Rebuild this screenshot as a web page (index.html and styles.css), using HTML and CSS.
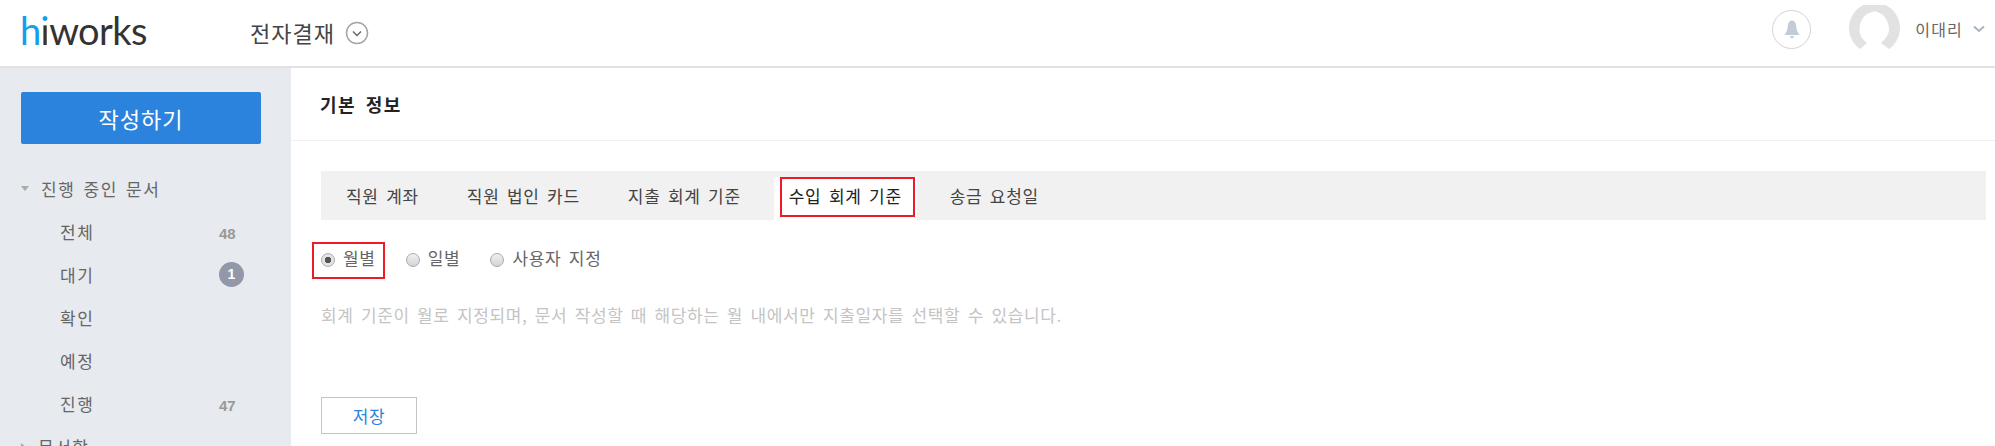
FILE: index.html
```html
<!DOCTYPE html>
<html lang="ko">
<head>
  <meta charset="UTF-8">
  <meta name="viewport" content="width=device-width, initial-scale=1.0">
  <title>전자결재 - 기본 정보</title>
  <link rel="stylesheet" href="styles.css">
</head>
<body>
  <header class="topbar">
    <div class="logo"><span class="logo-h">h</span><span class="logo-i">i</span>works</div>
    <div class="app-name">전자결재</div>
    <svg class="app-arrow" width="24" height="24" viewBox="0 0 24 24">
      <circle cx="12" cy="12" r="10.5" fill="#fff" stroke="#a5a5a5" stroke-width="1.5"/>
      <path d="M8 10.500 L12 14.500 L16 10.500" fill="none" stroke="#666" stroke-width="1.4"/>
    </svg>
    <div class="topbar-right">
      <div class="bell">
        <svg width="16" height="19" viewBox="0 0 16 19">
          <path d="M8 0.500 C5.500 0.500 4 3 3.800 6 C3.500 10 2.500 12.500 0.500 15 L15.500 15 C13.500 12.500 12.500 10 12.200 6 C12 3 10.500 0.500 8 0.500 Z" fill="#c3cbd5"/>
          <rect x="6" y="16" width="4" height="2" rx="1" fill="#c3cbd5"/>
        </svg>
      </div>
      <svg class="avatar" width="51" height="44" viewBox="0 0 51 44">
        <path d="M11 44 A25.500 25.500 0 1 1 40 44 L32 38 C37 33 40 29 40 25 C40 16 35 9 29 7.500 L26 6 L22 7.500 C15 9 10.500 16 10.500 25 C10.500 30 13 34 18 38 Z" fill="#e2e2e2"/>
      </svg>
      <span class="user-name">이대리</span>
      <svg class="user-arrow" width="12" height="8" viewBox="0 0 12 8">
        <path d="M1 1.500 L6 6 L11 1.500" fill="none" stroke="#a9b2bd" stroke-width="2"/>
      </svg>
    </div>
  </header>

  <div class="layout">
    <aside class="sidebar">
      <button class="write-btn">작성하기</button>
      <div class="nav-group"><span class="tri-down"></span>진행 중인 문서</div>
      <ul class="nav-list">
        <li><span>전체</span><span class="count">48</span></li>
        <li><span>대기</span><span class="badge">1</span></li>
        <li><span>확인</span></li>
        <li><span>예정</span></li>
        <li><span>진행</span><span class="count">47</span></li>
      </ul>
      <div class="nav-group"><span class="tri-right"></span>문서함</div>
    </aside>

    <main class="content">
      <h2 class="page-title">기본 정보</h2>
      <div class="panel">
        <div class="tabs">
          <a class="tab">직원 계좌</a>
          <a class="tab">직원 법인 카드</a>
          <a class="tab">지출 회계 기준</a>
          <a class="tab active">수입 회계 기준</a>
          <a class="tab">송금 요청일</a>
        </div>
        <div class="radios">
          <label class="radio marked"><span class="dot checked"></span>월별</label>
          <label class="radio"><span class="dot"></span>일별</label>
          <label class="radio"><span class="dot"></span>사용자 지정</label>
        </div>
        <p class="hint">회계 기준이 월로 지정되며, 문서 작성할 때 해당하는 월 내에서만 지출일자를 선택할 수 있습니다.</p>
        <button class="save-btn">저장</button>
      </div>
    </main>
  </div>
</body>
</html>
```

FILE: styles.css
```css
* {
  box-sizing: border-box;
}

html, body {
  height: 100%;
}

body {
  margin: 0;
  font-family: 'Noto Sans CJK KR', 'Noto Sans', sans-serif;
  background: #fff;
  color: #333;
  overflow: hidden;
}

.topbar {
  display: flex;
  align-items: center;
  height: 68px;
  padding: 0 10px 0 20px;
  border-bottom: 2px solid #e2e2e2;
}

.logo {
  width: 230px;
  margin-bottom: 6px;
  font-family: 'Lato', sans-serif;
  font-size: 38px;
  line-height: 40px;
  color: #333;
  letter-spacing: -0.6px;
}

.logo-h {
  color: #12a0ec;
}

.logo-i {
  background: linear-gradient(#12a0ec 0, #12a0ec 42%, #333 42%);
  -webkit-background-clip: text;
  background-clip: text;
  color: transparent;
}

.app-name {
  margin-bottom: 3px;
  font-size: 22px;
  color: #444;
  letter-spacing: 1px;
}

.app-arrow {
  margin-left: 10px;
}

.topbar-right {
  display: flex;
  align-items: center;
  margin-left: auto;
  padding-bottom: 8px;
}

.bell {
  display: flex;
  align-items: center;
  justify-content: center;
  width: 39px;
  height: 39px;
  border: 1px solid #d4d4d4;
  border-radius: 50%;
}

.avatar {
  display: block;
  margin-left: 38px;
  margin-bottom: 4px;
}

.user-name {
  margin-left: 15px;
  font-size: 16px;
  color: #666;
  letter-spacing: 1.2px;
}

.user-arrow {
  margin-left: 10px;
}

.layout {
  display: flex;
  height: 378px;
}

.sidebar {
  width: 291px;
  padding: 24px 0 0 21px;
  background: #e7eaee;
  overflow: hidden;
}

.write-btn {
  display: block;
  width: 240px;
  height: 52px;
  padding-bottom: 2px;
  border: 0;
  border-radius: 2px;
  background: #2b83dd;
  color: #fff;
  font: inherit;
  font-size: 22px;
  letter-spacing: 1px;
}

.nav-group {
  display: flex;
  align-items: center;
  height: 43px;
  margin-top: 23px;
  font-size: 17px;
  color: #666;
  letter-spacing: 1.5px;
  word-spacing: 2px;
}

.nav-group:last-child {
  margin-top: 0;
}

.tri-down {
  width: 0;
  height: 0;
  margin-right: 12px;
  border-top: 5px solid #aaa;
  border-left: 4px solid transparent;
  border-right: 4px solid transparent;
}

.tri-right {
  width: 0;
  height: 0;
  margin-right: 12px;
  border-left: 5px solid #aaa;
  border-top: 4px solid transparent;
  border-bottom: 4px solid transparent;
}

.nav-list {
  list-style: none;
  margin: 0;
  padding: 0 0 0 39px;
}

.nav-list li {
  position: relative;
  height: 43px;
  display: flex;
  align-items: center;
  font-size: 17px;
  color: #666;
  letter-spacing: 1.5px;
}

.count {
  position: absolute;
  left: 159px;
  top: 15px;
  font-size: 15px;
  font-weight: bold;
  font-family: 'Liberation Sans', sans-serif;
  color: #999;
  letter-spacing: 0;
}

.badge {
  position: absolute;
  left: 159px;
  width: 25px;
  height: 25px;
  border-radius: 50%;
  background: #9298a8;
  color: #fff;
  text-align: center;
  line-height: 25px;
  font-size: 14px;
  font-weight: bold;
  font-family: 'Liberation Sans', sans-serif;
  letter-spacing: 0;
}

.content {
  flex: 1;
}

.page-title {
  height: 73px;
  margin: 0;
  padding-left: 29px;
  border-bottom: 1px solid #f1f1f1;
  font-size: 18px;
  line-height: 72px;
  font-weight: bold;
  color: #222;
  letter-spacing: 1.5px;
  word-spacing: 3px;
}

.panel {
  padding: 30px 9px 0 30px;
}

.tabs {
  display: flex;
  height: 49px;
  padding: 6px 0 0 1px;
  background: #f1f1f1;
}

.tab {
  position: relative;
  height: 43px;
  margin: 0 9px;
  padding: 0 15px;
  font-size: 17px;
  line-height: 37px;
  color: #444;
  letter-spacing: 0.7px;
  word-spacing: 2px;
}

.tab.active {
  background: #fff;
  color: #222;
}

.tab.active::after {
  content: '';
  position: absolute;
  left: 6px;
  right: 2px;
  top: 0;
  bottom: 3px;
  border: 2px solid #ed1c24;
}

.radios {
  display: flex;
  align-items: center;
  margin-top: 19px;
  height: 36px;
}

.radio {
  position: relative;
  display: flex;
  align-items: center;
  margin-right: 30px;
  font-size: 17px;
  color: #666;
  letter-spacing: 0.7px;
  word-spacing: 2px;
}

.radio.marked::after {
  content: '';
  position: absolute;
  left: -9px;
  right: -9px;
  top: -3px;
  bottom: -9px;
  border: 2px solid #ed1c24;
}

.dot {
  width: 14px;
  height: 14px;
  margin-top: 5px;
  margin-right: 8px;
  border: 1px solid #aaa;
  border-radius: 50%;
  background: linear-gradient(#f0f0f0, #d4d4d4);
}

.dot.checked {
  background: radial-gradient(circle, #555 0, #555 3px, #e4e4e4 3.500px);
}

.hint {
  margin: 28px 0 0;
  font-size: 17px;
  line-height: 24px;
  color: #c4c4c4;
  letter-spacing: 0.62px;
  word-spacing: 2px;
}

.save-btn {
  display: block;
  width: 96px;
  height: 37px;
  margin-top: 70px;
  border: 1px solid #c4c4c4;
  background: #fff;
  color: #2b83dd;
  font: inherit;
  font-size: 17px;
  letter-spacing: 0.5px;
}
```
